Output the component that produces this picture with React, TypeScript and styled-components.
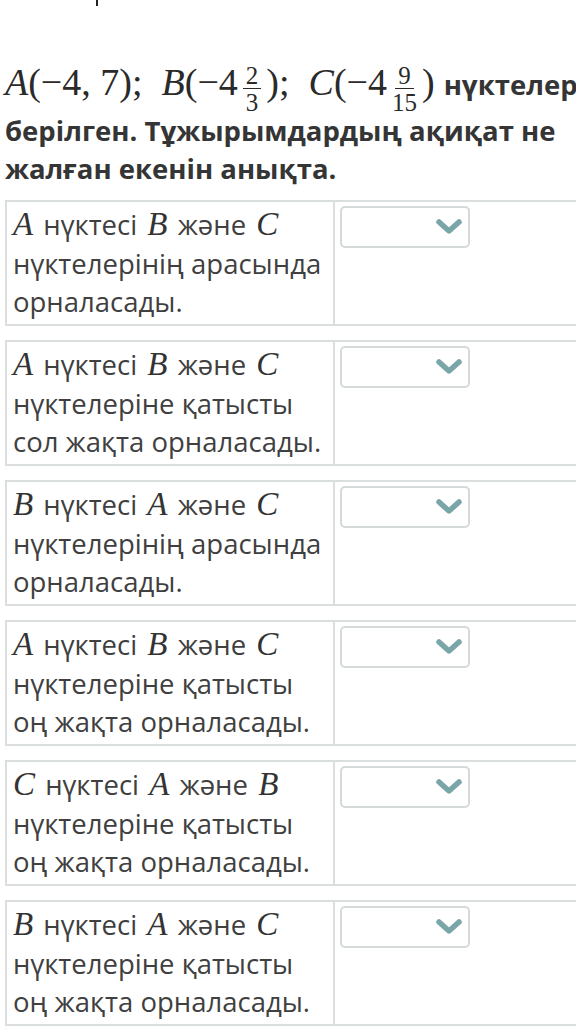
import React from "react";
import styled, { createGlobalStyle } from "styled-components";

const Global = createGlobalStyle`
  html, body { margin: 0; padding: 0; background: #fff; overflow: hidden; }
  body { width: 576px; }
`;

const Page = styled.div`
  width: 640px;
  font-family: "Open Sans", "Noto Sans", sans-serif;
  color: #3b3b3b;
`;

const TopStub = styled.div`
  height: 6px;
  overflow: hidden;
  padding-left: 96px;
  display: flex;
  align-items: flex-end;
`;

const StubMark = styled.span`
  display: block;
  width: 2px;
  height: 6px;
  background: #222;
`;

const Title = styled.div`
  margin: 57px 0 0 5px;
  width: 610px;
  font-weight: 700;
  font-size: 27.5px;
  line-height: 38px;
  color: #353535;
`;

const MathLine = styled.span`
  font-family: "Liberation Serif", "DejaVu Serif", serif;
  font-weight: 400;
  font-size: 38px;
  line-height: 38px;
  color: #2a2a2a;
  margin-right: 9px;
`;

const MathVar = styled.i`
  font-family: "Liberation Serif", "DejaVu Serif", serif;
  font-style: italic;
  font-weight: 400;
`;

const Gap = styled.span`
  display: inline-block;
  width: 19px;
`;

const Frac = styled.span`
  display: inline-flex;
  flex-direction: column;
  align-items: center;
  vertical-align: 11px;
  font-size: 25px;
  line-height: 19px;
  margin: 0 5px 0 5px;
`;

const Num = styled.span`
  padding: 0 3px 3px;
  border-bottom: 1.5px solid #2a2a2a;
`;

const Den = styled.span`
  padding-top: 4px;
`;

const List = styled.div`
  margin-top: 12px;
  display: flex;
  flex-direction: column;
  gap: 14px;
  padding-left: 5px;
`;

const Row = styled.div`
  display: grid;
  grid-template-columns: 328px 300px;
  height: 126px;
  border: 2px solid #dadede;
  box-sizing: border-box;
`;

const TextCell = styled.div`
  border-right: 2px solid #dadede;
  padding: 3px 0 0 6px;
  font-size: 27.5px;
  line-height: 38.5px;
  color: #404040;
  white-space: nowrap;
`;

const Var = styled.i`
  font-family: "Liberation Serif", "DejaVu Serif", serif;
  font-style: italic;
  font-size: 33px;
  color: #333;
  margin: 0 3px;
  &:first-child { margin-left: 0; }
`;

const SelectCell = styled.div`
  padding: 4px 0 0 5px;
`;

const Select = styled.div`
  width: 130px;
  height: 42px;
  box-sizing: border-box;
  border: 2px solid #d4dada;
  border-radius: 5px;
  display: flex;
  align-items: center;
  justify-content: flex-end;
  padding-right: 5px;
`;

const Chevron = () => (
  <svg width="28" height="18" viewBox="0 0 28 18">
    <path d="M4 4 L14 13 L24 4" fill="none" stroke="#7aa6aa" strokeWidth="5.5" strokeLinecap="round" strokeLinejoin="round" />
  </svg>
);

type Item = { a: string; b: string; c: string; line2: string; line3: string };

const items: Item[] = [
  { a: "A", b: "B", c: "C", line2: "нүктелерінің арасында", line3: "орналасады." },
  { a: "A", b: "B", c: "C", line2: "нүктелеріне қатысты", line3: "сол жақта орналасады." },
  { a: "B", b: "A", c: "C", line2: "нүктелерінің арасында", line3: "орналасады." },
  { a: "A", b: "B", c: "C", line2: "нүктелеріне қатысты", line3: "оң жақта орналасады." },
  { a: "C", b: "A", c: "B", line2: "нүктелеріне қатысты", line3: "оң жақта орналасады." },
  { a: "B", b: "A", c: "C", line2: "нүктелеріне қатысты", line3: "оң жақта орналасады." },
];

export default function App() {
  return (
    <Page>
      <Global />
      <TopStub>
        <StubMark />
      </TopStub>
      <Title>
        <MathLine>
          <MathVar>A</MathVar>(−4, 7);<Gap /><MathVar>B</MathVar>(−4
          <Frac>
            <Num>2</Num>
            <Den>3</Den>
          </Frac>
          );<Gap /><MathVar>C</MathVar>(−4
          <Frac>
            <Num>9</Num>
            <Den>15</Den>
          </Frac>
          )
        </MathLine>
        нүктелері берілген. Тұжырымдардың ақиқат не жалған екенін анықта.
      </Title>
      <List>
        {items.map((it, i) => (
          <Row key={i}>
            <TextCell>
              <Var>{it.a}</Var> нүктесі <Var>{it.b}</Var> және <Var>{it.c}</Var>
              <br />
              {it.line2}
              <br />
              {it.line3}
            </TextCell>
            <SelectCell>
              <Select>
                <Chevron />
              </Select>
            </SelectCell>
          </Row>
        ))}
      </List>
    </Page>
  );
}
